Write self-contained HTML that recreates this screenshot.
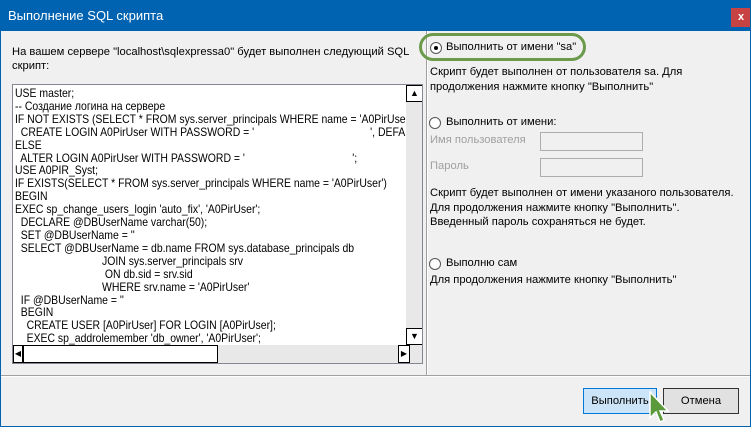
<!DOCTYPE html>
<html><head><meta charset="utf-8"><style>
*{margin:0;padding:0;box-sizing:border-box}
body{width:751px;height:427px;overflow:hidden;background:#f0f0f0;font-family:"Liberation Sans","DejaVu Sans",sans-serif;font-size:11.2px;color:#000;position:relative}
.a{position:absolute;white-space:nowrap}
#title{left:0;top:0;width:751px;height:31px;background:#0063b1;color:#fff;font-size:13px;padding:8px 0 0 8px}
#close{left:731px;top:8px;width:20px;height:19px;background:#c74343;color:#fff;font-size:11px;text-align:center;line-height:18px;font-weight:bold}
.bl{background:#0063b1}
#sql{left:12px;top:84px;width:411px;height:280px;background:#fff;border:1px solid #828790;overflow:hidden}
#code{left:2px;top:2px;font-size:12px;line-height:12.9px;transform:scaleX(0.87);transform-origin:0 0}
.sb{background:#e8e8e8}
.btn{border:1px solid #000;background:#fff}
.radio{width:12px;height:12px;border:1px solid #555;border-radius:50%;background:#fff}
.inp{border:1px solid #adadad;background:#f0f0f0}
.g{color:#a0a0a0}
</style></head><body>
<div class="a" id="title">Выполнение SQL скрипта</div>
<div class="a" id="close">x</div>
<div class="a bl" style="left:0;top:0;width:1px;height:427px"></div>
<div class="a bl" style="left:750px;top:0;width:1px;height:427px"></div>
<div class="a bl" style="left:0;top:426px;width:751px;height:1px"></div>

<div class="a" style="left:12px;top:45px;line-height:14px">На вашем сервере "localhost\sqlexpressa0" будет выполнен следующий SQL<br>скрипт:</div>

<div class="a" id="sql">
<div class="a" id="code">USE master;<br>-- Создание логина на сервере<br>IF NOT EXISTS (SELECT * FROM sys.server_principals WHERE name = 'A0PirUser')<br>&nbsp; CREATE LOGIN A0PirUser WITH PASSWORD = '&nbsp;&nbsp;&nbsp;&nbsp;&nbsp;&nbsp;&nbsp;&nbsp;&nbsp;&nbsp;&nbsp;&nbsp;&nbsp;&nbsp;&nbsp;&nbsp;&nbsp;&nbsp;&nbsp;&nbsp;&nbsp;&nbsp;&nbsp;&nbsp;&nbsp;&nbsp;&nbsp;&nbsp;&nbsp;&nbsp;&nbsp;&nbsp;&nbsp;&nbsp;&nbsp;&nbsp;&nbsp;&nbsp;&nbsp;&nbsp;', DEFAULT_DATABASE<br>ELSE<br>&nbsp; ALTER LOGIN A0PirUser WITH PASSWORD = '&nbsp;&nbsp;&nbsp;&nbsp;&nbsp;&nbsp;&nbsp;&nbsp;&nbsp;&nbsp;&nbsp;&nbsp;&nbsp;&nbsp;&nbsp;&nbsp;&nbsp;&nbsp;&nbsp;&nbsp;&nbsp;&nbsp;&nbsp;&nbsp;&nbsp;&nbsp;&nbsp;&nbsp;&nbsp;&nbsp;&nbsp;&nbsp;&nbsp;&nbsp;&nbsp;&nbsp;&nbsp;';<br>USE A0PIR_Syst;<br>IF EXISTS(SELECT * FROM sys.server_principals WHERE name = 'A0PirUser')<br>BEGIN<br>EXEC sp_change_users_login 'auto_fix', 'A0PirUser';<br>&nbsp; DECLARE @DBUserName varchar(50);<br>&nbsp; SET @DBUserName = ''<br>&nbsp; SELECT @DBUserName = db.name FROM sys.database_principals db<br>&nbsp;&nbsp;&nbsp;&nbsp;&nbsp;&nbsp;&nbsp;&nbsp;&nbsp;&nbsp;&nbsp;&nbsp;&nbsp;&nbsp;&nbsp;&nbsp;&nbsp;&nbsp;&nbsp;&nbsp;&nbsp;&nbsp;&nbsp;&nbsp;&nbsp;&nbsp;&nbsp;&nbsp;&nbsp;&nbsp;JOIN sys.server_principals srv<br>&nbsp;&nbsp;&nbsp;&nbsp;&nbsp;&nbsp;&nbsp;&nbsp;&nbsp;&nbsp;&nbsp;&nbsp;&nbsp;&nbsp;&nbsp;&nbsp;&nbsp;&nbsp;&nbsp;&nbsp;&nbsp;&nbsp;&nbsp;&nbsp;&nbsp;&nbsp;&nbsp;&nbsp;&nbsp;&nbsp;&nbsp;ON db.sid = srv.sid<br>&nbsp;&nbsp;&nbsp;&nbsp;&nbsp;&nbsp;&nbsp;&nbsp;&nbsp;&nbsp;&nbsp;&nbsp;&nbsp;&nbsp;&nbsp;&nbsp;&nbsp;&nbsp;&nbsp;&nbsp;&nbsp;&nbsp;&nbsp;&nbsp;&nbsp;&nbsp;&nbsp;&nbsp;&nbsp;&nbsp;WHERE srv.name = 'A0PirUser'<br>&nbsp; IF @DBUserName = ''<br>&nbsp; BEGIN<br>&nbsp;&nbsp;&nbsp; CREATE USER [A0PirUser] FOR LOGIN [A0PirUser];<br>&nbsp;&nbsp;&nbsp; EXEC sp_addrolemember 'db_owner', 'A0PirUser';</div>
<div class="a sb" style="left:393px;top:0;width:17px;height:279px"></div>
<div class="a btn" style="left:393px;top:0;width:17px;height:17px;font-size:9px;text-align:center;line-height:15px">▲</div>
<div class="a btn" style="left:393px;top:243px;width:17px;height:17px;font-size:9px;text-align:center;line-height:15px">▼</div>
<div class="a sb" style="left:0;top:260px;width:393px;height:18px"></div>
<div class="a btn" style="left:0;top:260px;width:10px;height:18px;font-size:8px;line-height:16px;text-align:center">◀</div>
<div class="a btn" style="left:10px;top:260px;width:195px;height:18px"></div>
<div class="a btn" style="left:385px;top:260px;width:12px;height:18px;font-size:8px;line-height:16px;text-align:center">▶</div>
</div>

<div class="a" style="left:426px;top:31px;width:1px;height:345px;background:#a0a0a0"></div>
<div class="a" style="left:427px;top:31px;width:1px;height:345px;background:#fff"></div>
<div class="a" style="left:1px;top:375px;width:749px;height:1px;background:#a0a0a0"></div>
<div class="a" style="left:1px;top:376px;width:749px;height:1px;background:#fff"></div>

<div class="a" style="left:419px;top:33px;width:167px;height:28px;border:3px solid #6a9a4a;border-radius:14px"></div>
<div class="a radio" style="left:430px;top:42px"></div>
<div class="a" style="left:434px;top:46px;width:4px;height:4px;background:#000;border-radius:50%"></div>
<div class="a" style="left:446px;top:41px">Выполнить от имени "sa"</div>
<div class="a" style="left:430px;top:65px;line-height:15px">Скрипт будет выполнен от пользователя sa. Для<br>продолжения нажмите кнопку "Выполнить"</div>

<div class="a radio" style="left:429px;top:117px"></div>
<div class="a" style="left:446px;top:116px">Выполнить от имени:</div>
<div class="a g" style="left:430px;top:134px">Имя пользователя</div>
<div class="a inp" style="left:540px;top:132px;width:103px;height:19px"></div>
<div class="a g" style="left:430px;top:160px">Пароль</div>
<div class="a inp" style="left:540px;top:158px;width:103px;height:19px"></div>
<div class="a" style="left:430px;top:186px;line-height:15px">Скрипт будет выполнен от имени указаного пользователя.<br>Для продолжения нажмите кнопку "Выполнить".</div>
<div class="a" style="left:430px;top:216px">Введенный пароль сохраняться не будет.</div>

<div class="a radio" style="left:429px;top:258px"></div>
<div class="a" style="left:446px;top:257px">Выполню сам</div>
<div class="a" style="left:430px;top:274px">Для продолжения нажмите кнопку "Выполнить"</div>

<div class="a" style="left:583px;top:388px;width:74px;height:26px;background:#cce4f7;border:1px solid #0078d7;text-align:center;line-height:24px">Выполнить</div>
<div class="a" style="left:663px;top:388px;width:76px;height:26px;background:#e1e1e1;border:1px solid #333;text-align:center;line-height:24px">Отмена</div>
<svg class="a" style="left:648px;top:390px" width="22" height="36" viewBox="0 0 22 36"><path d="M2 2 L2 28 L8 22 L12 32 L16 30 L12 21 L20 21 Z" fill="#5a9a3a" stroke="#fff" stroke-width="1.5"/></svg>
</body></html>
